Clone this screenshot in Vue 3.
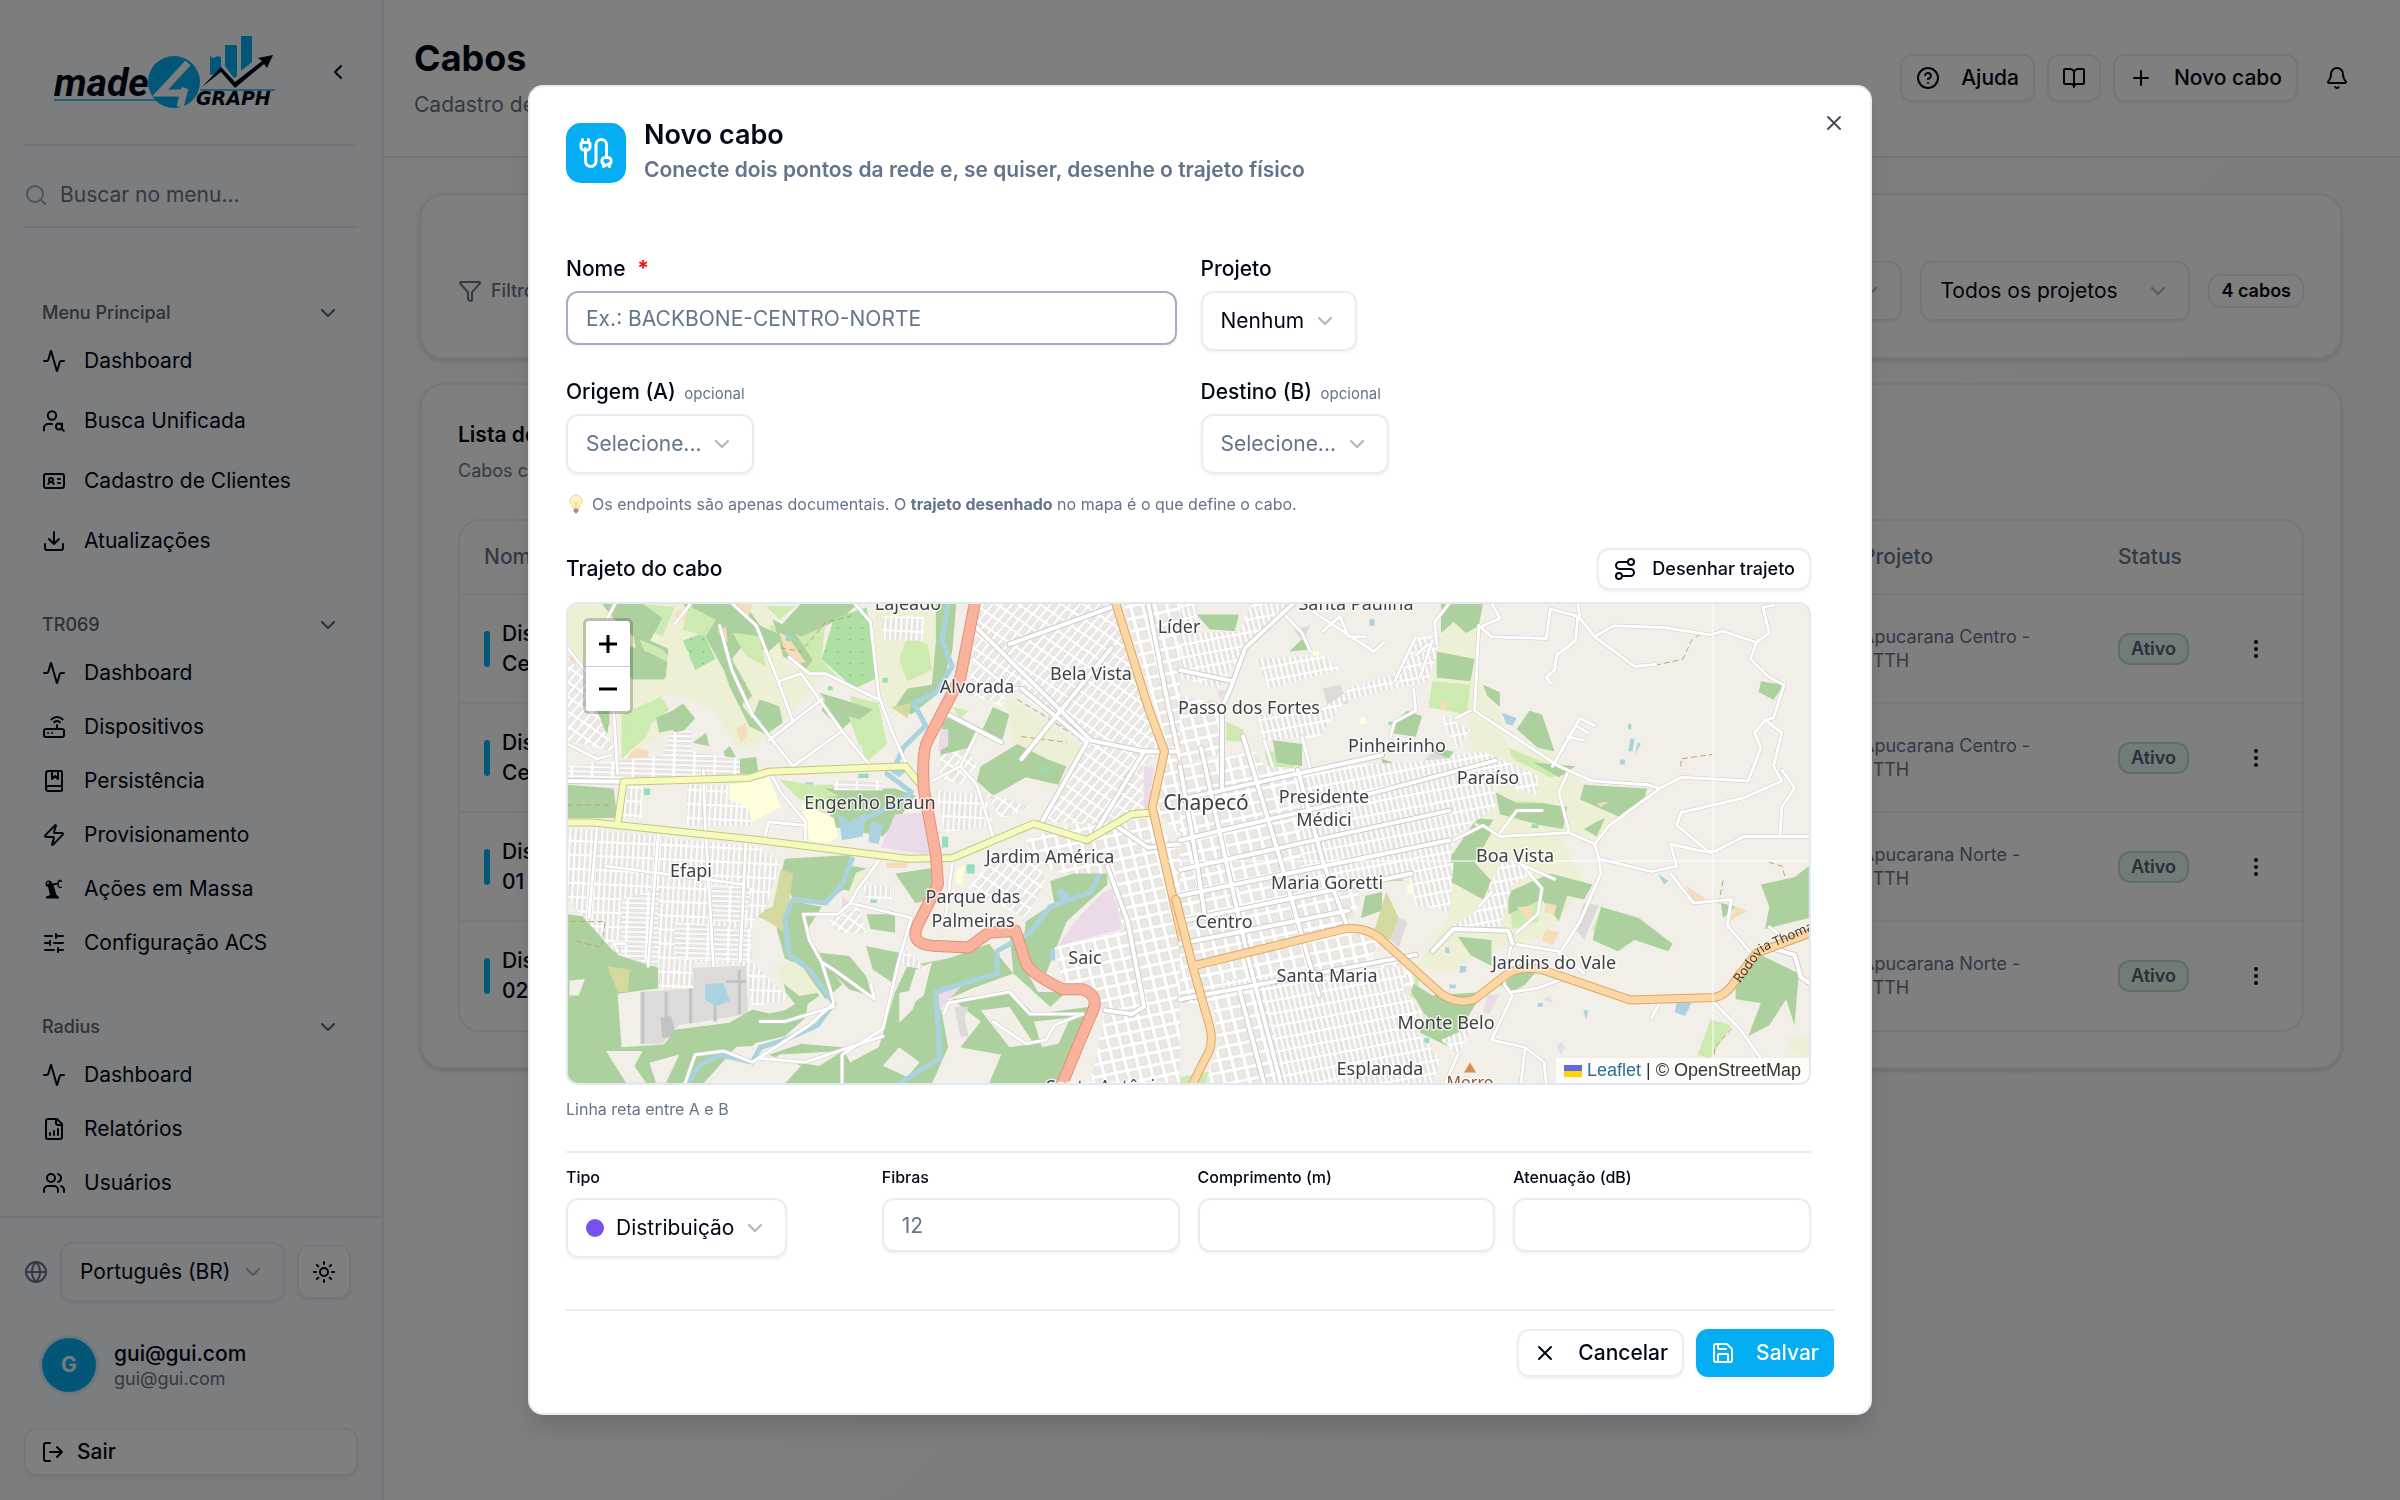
<script setup>
import { ref } from 'vue'

const circle = (x, y, r) => `M${x - r} ${y}a${r} ${r} 0 1 0 ${r * 2} 0a${r} ${r} 0 1 0 ${-r * 2} 0`

const icons = {
  activity: 'M22 12h-2.48a2 2 0 0 0-1.93 1.46l-2.35 8.36a.25.25 0 0 1-.48 0L9.24 2.18a.25.25 0 0 0-.48 0l-2.35 8.36A2 2 0 0 1 4.49 12H2',
  userSearch: circle(10, 6.5, 4.2) + 'M2 21.5v-2.500a4 4 0 0 1 4-4h4' + circle(17, 17.500, 3) + 'M20 14.500v5.500l1.800 1.800',
  idCard: 'M4 5h16a2 2 0 0 1 2 2v10a2 2 0 0 1-2 2H4a2 2 0 0 1-2-2V7a2 2 0 0 1 2-2zM16 10h2M16 14h2M6.17 15a3 3 0 0 1 5.66 0' + circle(9, 11, 2),
  download: 'M12 15V3M21 15v4a2 2 0 0 1-2 2H5a2 2 0 0 1-2-2v-4M7 10l5 5 5-5',
  router: 'M4 14h16a2 2 0 0 1 2 2v4a2 2 0 0 1-2 2H4a2 2 0 0 1-2-2v-4a2 2 0 0 1 2-2zM6.010 18H6M10.010 18H10M15 10v4M17.840 7.170a4 4 0 0 0-5.660 0M20.660 4.340a8 8 0 0 0-11.310 0',
  book: 'M10 2v8l3-3 3 3V2M4 19.500v-15A2.500 2.500 0 0 1 6.500 2H19a1 1 0 0 1 1 1v18a1 1 0 0 1-1 1H6.500a1 1 0 0 1 0-5H20',
  zap: 'M4 14a1 1 0 0 1-.78-1.630l9.900-10.200a.5.5 0 0 1 .860.460l-1.920 6.020A1 1 0 0 0 13 10h7a1 1 0 0 1 .780 1.630l-9.900 10.200a.5.5 0 0 1-.860-.460l1.920-6.020A1 1 0 0 0 11 14z',
  sliders: 'M10 5H3M12 19H3M14 3v4M16 17v4M21 12h-9M21 19h-5M21 5h-7M8 10v4M8 12H3',
  fileChart: 'M15 2H6a2 2 0 0 0-2 2v16a2 2 0 0 0 2 2h12a2 2 0 0 0 2-2V7zM14 2v4a2 2 0 0 0 2 2h4M8 18v-2M12 18v-4M16 18v-6',
  users: 'M16 21v-2a4 4 0 0 0-4-4H6a4 4 0 0 0-4 4v2' + circle(9, 7, 4) + 'M22 21v-2a4 4 0 0 0-3-3.870M16 3.130a4 4 0 0 1 0 7.750',
  globe: circle(12, 12, 10) + 'M12 2a14.500 14.500 0 0 0 0 20 14.500 14.500 0 0 0 0-20M2 12h20',
  sun: circle(12, 12, 4) + 'M12 2v2M12 20v2M4.930 4.930l1.410 1.410M17.660 17.660l1.410 1.410M2 12h2M20 12h2M6.340 17.660l-1.410 1.410M19.070 4.930l-1.410 1.410',
  logout: 'M16 17l5-5-5-5M21 12H9M9 21H5a2 2 0 0 1-2-2V5a2 2 0 0 1 2-2h4',
  help: circle(12, 12, 10) + 'M9.090 9a3 3 0 0 1 5.830 1c0 2-3 3-3 3M12 17h.01',
  bookOpen: 'M12 7v14M3 18a1 1 0 0 1-1-1V4a1 1 0 0 1 1-1h5a4 4 0 0 1 4 4 4 4 0 0 1 4-4h5a1 1 0 0 1 1 1v13a1 1 0 0 1-1 1h-6a3 3 0 0 0-3 3 3 3 0 0 0-3-3z',
  plus: 'M5 12h14M12 5v14',
  bell: 'M10.268 21a2 2 0 0 0 3.464 0M3.262 15.326A1 1 0 0 0 4 17h16a1 1 0 0 0 .740-1.673C19.410 13.956 18 12.499 18 8A6 6 0 0 0 6 8c0 4.499-1.411 5.956-2.738 7.326',
  filter: 'M10 20a1 1 0 0 0 .553.895l2 1A1 1 0 0 0 14 21v-7a2 2 0 0 1 .517-1.341L21.740 4.670A1 1 0 0 0 21 3H3a1 1 0 0 0-.742 1.670l7.225 7.989A2 2 0 0 1 10 14z',
  search: circle(11, 11, 8) + 'M21 21l-4.300-4.300',
  cable: 'M17 21v-2a1 1 0 0 1-1-1v-1a2 2 0 0 1 2-2h2a2 2 0 0 1 2 2v1a1 1 0 0 1-1 1zM19 15V6.500a1 1 0 0 0-7 0v11a1 1 0 0 1-7 0V9M21 21v-2M3 5V3M4 10a2 2 0 0 1-2-2V6a1 1 0 0 1 1-1h4a1 1 0 0 1 1 1v2a2 2 0 0 1-2 2zM7 5V3',
  route: circle(6, 19, 3) + 'M9 19h8.500a3.500 3.500 0 0 0 0-7h-11a3.500 3.500 0 0 1 0-7H15' + circle(18, 5, 3),
  save: 'M15.200 3a2 2 0 0 1 1.400.6l3.800 3.800a2 2 0 0 1 .6 1.400V19a2 2 0 0 1-2 2H5a2 2 0 0 1-2-2V5a2 2 0 0 1 2-2zM17 21v-7a1 1 0 0 0-1-1H8a1 1 0 0 0-1 1v7M7 3v4a1 1 0 0 0 1 1h7',
  close: 'M18 6L6 18M6 6l12 12',
  down: 'M6 9l6 6 6-6',
  left: 'M15 18l-6-6 6-6',
}
const robotArm = 'M4 21.500h13v-1.500l-2.500-2-3-9.500 4-1v2l2 1.500h2.500v-1.200h-2.200l-1-1V5.600l1-1 1.800.3.800-1-2.600-1.300-2.300 1.500v1.700l-5.400.6a3.300 3.300 0 1 0-4 3.600L8 18l-4 1.500z'

const groups = [
  { title: 'Menu Principal', roomy: true, items: [
    ['activity', 'Dashboard'], ['userSearch', 'Busca Unificada'], ['idCard', 'Cadastro de Clientes'], ['download', 'Atualizações'],
  ] },
  { title: 'TR069', items: [
    ['activity', 'Dashboard'], ['router', 'Dispositivos'], ['book', 'Persistência'], ['zap', 'Provisionamento'], ['robot', 'Ações em Massa'], ['sliders', 'Configuração ACS'],
  ] },
  { title: 'Radius', items: [['activity', 'Dashboard'], ['fileChart', 'Relatórios'], ['users', 'Usuários']] },
]

const cables = [
  { name: ['Distribuição', 'Centro 01'], project: ['Apucarana Centro -', 'FTTH'] },
  { name: ['Distribuição', 'Centro 02'], project: ['Apucarana Centro -', 'FTTH'] },
  { name: ['Distribuição', '01'], project: ['Apucarana Norte -', 'FTTH'] },
  { name: ['Distribuição', '02'], project: ['Apucarana Norte -', 'FTTH'] },
]

const nome = ref('')
const fibras = ref('')
const comprimento = ref('')
const atenuacao = ref('')

/* Map layers, west sheet and east sheet */
const west = {
  areas: [
    ['farm', 'M68 199H560L600 360L690 400L560 560L490 600L420 480L300 440L330 540L200 620L190 440L68 330ZM820 199H1000L980 380L860 500L820 400ZM1140 450L1330 590L1240 700L1160 600ZM580 1180L640 1170L690 1240L650 1275L600 1240Z'],
    ['grass', 'M230 199L330 210L300 290L240 260ZM560 260L700 240L690 350L730 400L640 380L590 320ZM760 450L830 470L850 580L800 630L780 560ZM900 290L950 310L960 380L900 410L880 350ZM200 500L300 450L260 560L200 620ZM600 690L760 690L850 760L700 770L640 730ZM1010 480L1050 490L1030 510Z'],
    ['wood', 'M150 199H250L300 240L270 300L330 330L290 390L240 370L230 290L180 240ZM350 200H500L540 260L600 290L560 330L500 310L470 350L520 450L500 470L440 360L400 280ZM640 199H780L740 240L640 290L590 260ZM300 510L350 470L380 510L340 560ZM100 490H170V530L120 520ZM700 450L790 490L740 540L690 490ZM68 690L180 700L190 780L68 780ZM490 620L530 615L535 660L490 660ZM450 600L465 585L480 615L455 620Z'],
    ['wood', 'M985 520L1010 500L1070 540L1040 620L980 630ZM1110 480L1150 500L1130 580L1080 550ZM1080 640L1170 580L1240 620L1290 640L1270 690L1190 670L1110 720L1070 680ZM600 890L760 880L770 950L700 1010L620 1000L590 930ZM870 930L960 915V1000L920 1010ZM690 700H870L920 720L880 780L840 830L700 800L720 750ZM970 199L1020 199L1010 330L980 440L910 500L870 480L900 430L960 420L970 300ZM800 1040H870V1090L810 1080Z'],
    ['wood', 'M1250 950L1390 900L1390 960L1290 1060L1240 1200L1180 1160L1190 1060L1260 1010ZM68 1040L160 1055L190 1150L290 1185V1240L190 1255L200 1400L330 1390L510 1320L600 1300L660 1260L650 1320L600 1370L480 1400L400 1498H68ZM600 1000L690 1020L650 1090L700 1170L740 1230L700 1270L640 1180L600 1160L580 1080ZM300 1000L350 970L400 1000L380 1035L310 1030Z'],
    ['wood', 'M560 1420L640 1390L740 1400L760 1440L830 1400L870 1250L900 1180L1000 1160L1100 1120L1160 1200L1060 1240L980 1280L1000 1400L960 1498H600L640 1450ZM1010 1270L1150 1250L1210 1310L1350 1290L1330 1400L1290 1498H1100L1130 1420L1030 1400L1080 1330ZM1150 1090L1210 1200L1290 1250L1250 1290L1160 1200Z'],
    ['land', 'M920 1190L960 1170L940 1260L890 1300ZM1080 1300L1150 1290L1210 1390L1150 1400ZM1210 1330L1300 1320L1270 1390L1230 1400ZM840 1450L880 1400L930 1440L900 1480ZM1050 1420L1090 1440L1070 1498H1030ZM440 1470L500 1440L520 1498H440ZM72 1220L110 1215L95 1260H72ZM1180 1170L1215 1210L1260 1250L1220 1250Z'],
    ['orchard', 'M720 240L800 210L830 400L770 430L690 350ZM350 300L400 280L430 350L380 380Z'],
    ['khaki', 'M590 920L620 930L600 1090L560 1060L520 1040L570 1020ZM165 1180L220 1190L215 1250L190 1250ZM860 480L910 470L900 510Z'],
    ['pink', 'M870 770L940 765L955 880L835 860ZM1380 980L1410 970L1425 1080L1270 1125L1310 1060ZM1070 310L1150 330L1130 370L1060 330ZM1360 290L1400 310L1370 340L1345 320ZM1500 420L1530 415V490L1510 495ZM980 540L1000 540V585L975 600ZM1480 640L1505 645L1490 755H1478ZM160 1000L200 1005L180 1050ZM970 1260L1040 1225L980 1300ZM740 990L760 1010L740 1030Z'],
    ['pale', 'M465 690L560 670L590 750L520 790L500 750L465 730ZM640 740L720 780L730 830L700 850L660 840ZM1390 340L1410 330L1415 360L1395 360ZM1110 470L1140 450L1130 480ZM1020 920L1040 910L1035 960L1018 955Z'],
    ['peach', 'M350 240L375 205L360 260ZM480 200L520 200L510 235ZM850 900H900V915H850ZM68 340L95 350L80 370Z'],
    ['grey', 'M375 1185L505 1180L510 1310L340 1340L300 1390L245 1390V1250L375 1240ZM1015 1290L1050 1290L1040 1320L1050 1370L1030 1370Z'],
    ['darkgrey', 'M305 1250H313V1370H305ZM425 1290H433V1330H425ZM485 1190H492V1310H485ZM455 1218H505V1226H455ZM365 1240H373V1335H365ZM295 1320L320 1315L335 1370L300 1375ZM248 1250H256V1390H248Z'],
    ['water', 'M730 770L760 790L800 765L790 830L740 840ZM810 790L840 795L830 850L805 845ZM405 1230L450 1225L465 1275L430 1290L405 1270ZM840 640L900 650L880 670ZM1250 1135H1262V1165H1250ZM650 683H670V690H650ZM1270 970L1300 985L1290 1010L1265 990Z'],
    ['mint', 'M255 700H270V718H255ZM135 890H150V935H135ZM1045 905H1065V930H1045ZM495 990H510V1010H495ZM1382 1410H1398V1435H1382ZM985 830H1000V860H985ZM780 660H805V672H780ZM810 990H825V1010H810ZM530 510H545V525H530ZM1230 640H1245V655H1230Z'],
  ],
  detail: [
    ['grass', 'M370 20L450 60L420 110L350 90ZM500 100L580 110L600 200L540 170ZM190 350L290 300L310 330L220 400L180 460ZM220 120L290 150L330 200L250 190ZM600 20L690 20L640 60ZM840 330L930 340L930 400L880 440ZM640 540L760 560L820 590L700 600Z'],
    ['wood', 'M270 355L350 320L385 355L350 385L280 400ZM160 130L250 160L310 190L300 240L200 240L160 200ZM470 200L540 250L530 320L590 400L550 380L490 260ZM720 25L790 30L770 65L730 60ZM620 60L680 90L740 180L720 210L650 170L640 120ZM760 280L830 300L920 330L880 360L810 340ZM580 300L640 320L650 370L600 405L550 380ZM30 345L130 345L125 400L60 385ZM380 430L420 400L430 440Z'],
    ['wood', 'M760 1060L850 1070L900 1130L920 1190L850 1170L800 1120ZM640 1100L700 1090L760 1190L700 1230L660 1180ZM900 1040L1000 1060L980 1150L920 1110ZM720 1040L760 1060L750 1120ZM330 1290L490 1270L560 1230L640 1250L560 1340L360 1350L290 1340ZM860 800L920 810L870 880L830 870Z'],
    ['land', 'M120 1355L230 1355L205 1400L240 1450H180ZM250 1390L340 1365L300 1450H270ZM640 1365L830 1355L760 1400L700 1390L650 1450L580 1420ZM790 1190L860 1180L940 1210L950 1290L880 1340L730 1325L780 1260ZM1000 1180L1060 1170L1040 1230L1000 1270ZM490 1390L560 1400L520 1450H500Z'],
    ['farm', 'M625 1100L700 1085L760 1180L700 1190L650 1150ZM310 110L370 160L330 280L250 300L300 230ZM870 820L920 800L890 860L840 900Z'],
    ['peach', 'M185 470L210 445L250 455L240 480L190 490ZM510 390L540 370L545 410L525 430ZM455 95L480 80L485 130ZM640 100L665 110L720 190L690 190L655 150ZM320 45L345 30L350 60ZM530 15L560 20L550 45Z'],
    ['mint', 'M660 110H680V125H660ZM785 260H800V272H785ZM575 355H590V370H575ZM950 235H965V250H950Z'],
  ],
  grids: [
    ['tall', 'M68 805L540 860L590 900L550 1030L520 1060V1170L610 1270L520 1290L505 1180L400 1170L270 1180L180 1140L100 1040L68 1000Z'],
    ['flat', 'M200 1000L290 970L290 1180L200 1150ZM330 1060L520 1080L515 1170L330 1160ZM420 960L520 970L500 1060L420 1060Z'],
    ['tall', 'M200 690H250V780L190 780ZM360 690H460V730L510 750L520 800L360 800ZM840 235H940V300H840ZM970 705L1090 720L1110 800L990 820ZM290 1180L375 1170V1240H290Z'],
    ['flat', 'M68 640L300 610L320 550L370 540V600L490 620V665L68 685ZM720 680H840V705H720Z'],
    ['slant', 'M68 350L100 380L180 600L68 570ZM980 610L1050 590L1070 640L1030 690L980 670ZM1090 710L1200 750L1130 780ZM1050 970L1100 900L1200 860L1240 950L1190 1050L1100 1000ZM1060 360L1180 400L1130 470L1050 450ZM700 1060L780 1020L800 1090L740 1090Z'],
    ['slant', 'M1075 199H1400L1520 600L1478 640V755L1410 800L1230 790L1340 590L1060 340V260Z'],
    ['block', 'M1190 840L1290 800L1500 780L1568 870V1498H1350L1385 1300L1280 1220L1260 1130L1430 1085L1390 930L1280 930L1220 900ZM1490 199H1568V620L1530 560L1440 250L1430 199ZM1540 600L1568 600V830L1510 760Z'],
    ['tall', 'M790 960L860 965V1000L800 1000ZM890 1130L950 1190L890 1180Z'],
  ],
  river: ['M1000 199L985 300L1010 370L970 440L915 470L945 530L890 590L870 640', 'M850 660L910 710L880 740L800 780', 'M765 890L740 960L700 1010L620 1000L600 1050L610 1150L660 1190L720 1280L680 1340L600 1380L540 1400L520 1440L440 1420L390 1450L360 1498', 'M1380 910L1350 980L1250 1020L1200 1090L1120 1140L1120 1200L970 1250L980 1430L880 1498'],
  tracks: ['M68 745H170M590 320L640 330L700 250L760 235M1170 460L1230 500L1300 550M1180 560L1290 575M75 1060L160 1060L150 1130L80 1110'],
  minor: [
    'M770 199L810 250L830 450L860 540L900 640', 'M470 199L530 260L580 400L620 520', 'M610 345L660 390L700 390L830 460', 'M440 260L470 380L520 500L620 640',
    'M560 570L690 460M585 410L640 390L740 545L810 640M620 640L740 545', 'M185 199L165 240M370 199L330 255', 'M68 320L110 380L180 480L190 660', 'M570 670L590 710L650 790V840',
    'M550 835L560 790L650 800', 'M830 895L780 970L760 1010L910 1050L880 1160L840 1350L740 1420V1498', 'M760 1010L730 1040L645 1040L660 1110L690 1170L720 1190L820 1270L810 1230',
    'M690 1170L710 1240L720 1280L660 1340L520 1440L450 1410L380 1420L355 1498', 'M540 1330L600 1330L720 1290', 'M990 1310L1000 1280L1150 1250L1200 1310L1330 1310', 'M1110 1330L1190 1390L1240 1380L1260 1340L1330 1310', 'M400 650L405 800L425 1180', 'M140 800L120 1050',
    'M290 820L265 1180', 'M505 830L490 1170', 'M1010 900L990 1080', 'M160 910L500 960', 'M960 680L1030 640L1075 540', 'M1030 640L1070 690L1110 830',
    'M68 580L140 620L175 610', 'M540 1430L650 1440L840 1370', 'M1060 350L1150 430L1180 430', 'M190 1140L180 1120L210 1120',
  ],
  major: ['M1000 500L1130 575', 'M1065 260L1350 570L1480 600L1568 600', 'M1180 430L1340 575L1230 790', 'M1360 820L1480 600', 'M1150 310L1400 210', 'M1385 1300L1450 1310L1480 1290L1440 1060L1390 910', 'M1410 800L1490 860L1568 850', 'M1490 199L1540 480L1568 620', 'M1400 320L1180 620', 'M68 680L200 682'],
  yellow: ['M60 792H130L540 840L900 890L1010 888L1210 795L1340 840L1450 770L1500 765', 'M190 795L205 682L510 672L560 655L895 640L940 700'],
  orange: ['M1408 190L1490 480L1530 600L1500 750L1580 1140'],
  red: ['M1067 190L1030 400L950 570Q935 600 940 700L970 880L975 960L925 1070Q905 1120 960 1125L1050 1130L1100 1090L1165 1085L1190 1170Q1200 1200 1280 1243L1330 1243Q1370 1260 1355 1300L1320 1390L1275 1510'],
}
const east = {
  areas: [
    ['farm', 'M640 199H720L700 390L760 500L780 590L880 600L950 680L1050 780L990 830L900 830L960 950L900 1060L850 1110L700 1150L640 1200L560 1180L640 1050L640 900L700 800L760 700L690 580L680 480L590 480L610 330ZM1440 1370L1494 1375V1430L1450 1410ZM200 199H240L210 230Z'],
    ['grass', 'M600 410L690 420L680 500L590 480ZM780 590L930 660L880 670L790 620ZM200 600L290 600L270 645L210 640ZM780 1000L860 1010L850 1060L790 1080ZM1260 1325L1310 1340L1260 1430L1230 1420ZM110 520L150 540L150 575L110 570ZM0 1480L100 1460V1498H0ZM520 1200L570 1210L560 1270L530 1250ZM760 730L880 740L880 770ZM1010 1000L980 1080L990 1100L1000 1020Z'],
    ['wood', 'M620 199H720L710 260L680 280L650 250L620 280ZM610 330L700 350L690 410L610 400ZM720 420L760 440V480L730 450ZM830 490L860 500L890 600L850 590L800 540ZM960 690L1110 700L1100 740L1050 780L950 730ZM750 710L800 740L860 740L920 750L910 810L860 800L760 770ZM700 790L640 890V950L720 1000L740 950L700 900L740 820ZM990 790L960 810L990 830L1010 780ZM700 780L745 785L730 810L700 800Z'],
    ['wood', 'M780 980L880 930L980 960L960 1000L920 990L900 1060L860 1000L780 1040ZM1000 1020L1090 1050L1170 1120L1160 1140L1080 1110L1040 1140L980 1110ZM440 990L480 980L480 1030L430 1050ZM530 1210L600 1260L720 1250L640 1400L570 1360L580 1310ZM660 1100L740 1110L740 1180L690 1150ZM1380 960L1460 940L1494 910V1050L1390 1080L1400 1020ZM1380 1150L1470 1200L1460 1340L1440 1270L1400 1340L1350 1370L1380 1280L1320 1270V1230Z'],
    ['wood', 'M1380 410L1435 420L1410 460L1375 440ZM540 490L575 505L560 560L500 550L510 520ZM220 570L290 580V640L230 630ZM40 230L140 230L130 275L70 270ZM645 650H665L670 750H645ZM300 285L305 325L260 330ZM1285 1010L1320 1020L1290 1050ZM545 370L575 355V380ZM600 590L650 600L640 620L600 610ZM800 1200L850 1190L820 1230L790 1250L760 1230ZM120 1270H150V1300H120ZM200 1410L230 1405V1465H200ZM480 620L530 640L520 660L480 650ZM840 630L940 640L900 670Z'],
    ['peach', 'M620 460L640 470L630 490L620 485ZM760 540L795 550L790 560ZM990 740L1020 735L1000 750ZM800 1020L840 1020L830 1060ZM870 1010L895 1015L890 1040L865 1035ZM1200 960L1250 1000L1220 1010ZM1320 1020L1350 1030L1305 1060ZM870 1080L900 1090L885 1125L860 1110ZM70 460L95 470L50 590L20 600L10 560L50 500Z'],
    ['khaki', 'M490 915L530 910V950L490 950ZM490 980L520 1050L500 1110L460 1090ZM240 1360L290 1350V1395L240 1395Z'],
    ['pink', 'M450 685L495 670L500 685L455 698ZM730 1260L760 1255L735 1310L720 1305ZM895 1400L905 1385L915 1400L905 1420ZM90 435H110L95 460ZM860 1270L880 1260L885 1280Z'],
    ['grey', 'M270 270L310 260L290 300ZM340 430L380 420L400 470L350 480ZM960 1010L995 1015L960 1110L940 1080ZM520 1050L540 1060L520 1130L500 1110ZM600 600L640 620L640 640L580 625Z'],
    ['water', 'M765 495L800 510L790 530L775 525ZM1070 565H1080L1075 600H1065ZM1088 575L1095 580L1080 608ZM1045 622H1057V635H1045ZM1180 1280H1215L1200 1315L1175 1305ZM665 1180L680 1180V1195L665 1200ZM958 1300H970L965 1325ZM1135 930L1160 950L1150 960ZM450 242H462V260H450ZM630 1130H640V1145H630ZM850 1280H862V1290H850ZM70 560L90 550V575L65 585ZM640 1230H655V1240H640Z'],
    ['pale', 'M315 330H330V350H315ZM428 508H442V525H428ZM315 1020L330 1020L325 1055H310ZM430 1145L458 1140V1180H432ZM540 960H558V985H540ZM50 1095L65 1100L60 1120ZM70 795H82V805H70ZM490 708H505V720H490ZM225 1045H235V1070H225ZM405 1175H420V1190H405Z'],
    ['mint', 'M255 1040H275V1062H255ZM835 797H852V807H835ZM418 1360H430V1372H418ZM1065 525H1072V540H1065ZM205 545H212V562H205ZM348 890H360V900H348ZM580 1375H592V1388H580ZM495 520H505V528H495Z'],
  ],
  detail: [],
  grids: [
    ['block', 'M0 640L180 600L200 640L300 650L420 640L400 900L430 1000L400 1070L480 1110L430 1200L100 1210L0 1200Z'],
    ['fine', 'M170 199H260L160 320L90 430L0 400V199H40V280L140 275ZM180 350L340 340L380 380L210 430ZM400 430L510 390L560 290L620 290L590 410L400 460ZM180 500L330 490L420 420L330 560L200 570ZM620 500L690 540L660 590L640 560ZM600 1020H560L540 920L650 900L640 1040Z'],
    ['fine', 'M280 650L740 610L750 750L650 830L640 920L400 960L290 930ZM640 610L720 600L850 665V720L750 680ZM770 890L850 920L790 960L760 1080L690 1090L650 1070L720 1020L735 960Z'],
    ['block', 'M0 1200L430 1200L540 1150L480 1130L560 1210L540 1280L0 1280Z'],
    ['fine', 'M90 1220L540 1180L530 1250L590 1320L560 1360L620 1430L600 1498H200ZM620 1380L700 1340L660 1420Z'],
    ['block', 'M0 450L90 470L110 600L0 640ZM80 1260L200 1240L240 1498H60L90 1400Z'],
  ],
  river: [],
  tracks: ['M1130 367L1195 350L1215 300L1240 280', 'M1190 640V620L1265 608M1400 900L1430 910L1440 950M1290 950L1280 1010', 'M1310 1350L1270 1400V1430'],
  minor: [
    'M710 260L700 490L900 640L980 680L1110 690L1140 700L1020 800L985 850L995 890L1120 925L1180 910L1165 850L1240 870L1270 870L1340 830H1500',
    'M710 260L740 290L870 295L880 215L945 235L940 300L895 340L890 380L870 400L880 415', 'M945 199L950 240L985 290L1080 370L1130 365',
    'M985 290L1030 260L1150 265L1260 285L1290 275L1370 305L1400 280L1385 210L1410 205', 'M1370 305L1355 350L1400 400L1435 420L1410 510L1390 515L1430 550L1410 640L1430 680L1340 725L1190 765L1180 800L1260 875',
    'M1140 700L1190 670L1350 680L1380 590L1365 550L1390 515', 'M1430 650L1460 700L1430 750L1425 825', 'M1165 930L1220 1010L1310 1000L1300 1070L1360 1150', 'M920 660L900 710L925 820L985 850',
    'M995 890L1000 930L950 1060L900 1150', 'M790 1120L900 1140L960 1200', 'M650 1080L770 1080L790 1100L770 1230L790 1260L740 1380L820 1400L865 1440L870 1498', 'M800 890L860 970L850 1040L800 1090', 'M800 900L890 945',
    'M885 640L950 510L985 530M940 530L970 550M920 560L960 570', 'M1270 1280L1330 1350L1380 1430', 'M1120 1320L1140 1280', 'M790 1250L850 1240L920 1210',
    'M610 310L605 250L640 199M740 199L760 240L720 260', 'M240 220L290 280L310 330M300 210L460 330L485 305M340 275L380 235L400 290L440 290', 'M500 560L510 520L560 490L555 430', 'M655 510L690 490', 'M740 980L710 1020', 'M650 840L720 800L760 830L920 820', 'M820 1400L810 1498M660 1420L630 1498', 'M1400 1075L1430 1100', 'M760 820L800 760L860 760',
    'M560 290L510 410M600 300L570 400M560 340L590 310', 'M200 570L220 640M290 560L310 650',
  ],
  major: ['M0 730L480 610', 'M0 840L300 760L750 625', 'M0 920L640 760', 'M0 990L640 840', 'M0 1060L550 930', 'M0 1120L400 1030', 'M270 199L155 320L120 430L100 480V700', 'M0 380L125 410', 'M50 590L110 900L160 1150L240 1498', 'M150 560L240 900L330 1260', 'M280 650L340 900L400 1080', 'M0 640L40 900L60 1050', 'M600 1140L650 1080L780 1085L790 1120', 'M0 1270L140 1240L200 1498', 'M140 1240L560 1150', 'M1400 1130L1460 1150L1475 1210L1500 1230'],
  yellow: [],
  orange: ['M-10 1000L30 1180L72 1350Q80 1400 60 1430L25 1510', 'M30 1180L390 1080Q440 1072 475 1105L620 1255Q660 1285 700 1270L780 1200Q810 1180 860 1190L1070 1272L1270 1265Q1300 1260 1325 1210L1370 1145L1510 1085'],
  red: [],
}
const sheets = [
  { id: 'west', shift: 'translate(-28 -74) scale(.40816 .3699)', ...west },
  { id: 'east', shift: 'translate(612 -74) scale(.42092 .3699)', ...east },
]
const places = [
  ['Lajeado', 340, 6], ['Alvorada', 409, 89], ['Bela Vista', 523, 76], ['Engenho Braun', 302, 205], ['Efapi', 123, 273], ['Jardim América', 482, 259],
  ['Parque das', 405, 299], ['Palmeiras', 405, 323], ['Saic', 517, 360], ['Santo Antônio', 538, 489], ['Líder', 611, 29], ['Santa Paulina', 788, 6],
  ['Passo dos Fortes', 681, 110], ['Pinheirinho', 829, 148], ['Paraíso', 920, 180], ['Presidente', 756, 199], ['Médici', 756, 222], ['Boa Vista', 947, 258],
  ['Maria Goretti', 759, 285], ['Centro', 656, 324], ['Santa Maria', 759, 378], ['Jardins do Vale', 986, 365], ['Monte Belo', 878, 425], ['Esplanada', 812, 471],
]
</script>

<template>
  <div class="app">
    <aside class="sidebar">
      <div class="brand">
        <svg class="logo" viewBox="0 0 224 76" role="img" aria-label="made4graph">
          <text class="logo-made" x="0" y="62">made</text>
          <path d="M0 66H104" stroke="#05aef2" stroke-width="1.500" />
          <circle cx="120" cy="48" r="26" fill="#05aef2" />
          <path d="M134 29L106 59H131M131 54L126 73" fill="none" stroke="#f8fafc" stroke-width="7" />
          <path d="M156 22l3 2 5-2 3 1v12l-6 5-5 1zM171 11h12v31l-3 2-9-12zM187 2h11v26l-11 9z" fill="#05aef2" />
          <path d="M148 53L167 33l14 15 27-21-4-3 15-3-6 13-3-4-29 24-14-16z" fill="#020817" />
          <path d="M146 56H221" stroke="#05aef2" stroke-width="1.500" />
          <text class="logo-graph" x="142" y="71">GRAPH</text>
        </svg>
        <button class="ghost" aria-label="Recolher menu"><svg class="icon" viewBox="0 0 24 24"><path :d="icons.left" /></svg></button>
      </div>
      <label class="search">
        <svg class="icon" viewBox="0 0 24 24"><path :d="icons.search" /></svg>
        <input type="text" placeholder="Buscar no menu..." aria-label="Buscar no menu" />
      </label>
      <nav class="nav">
        <section v-for="g in groups" :key="g.title" class="group">
          <button class="group-title">{{ g.title }}<svg class="icon" viewBox="0 0 24 24"><path :d="icons.down" /></svg></button>
          <div class="items" :class="{ roomy: g.roomy }">
            <a v-for="[icon, label] in g.items" :key="label" href="#" class="item">
              <svg v-if="icon === 'robot'" class="icon solid" viewBox="0 0 24 24"><path :d="robotArm" /><circle class="hole" cx="6" cy="6" r="1" /></svg>
              <svg v-else class="icon" viewBox="0 0 24 24"><path :d="icons[icon]" /></svg>
              {{ label }}
            </a>
          </div>
        </section>
      </nav>
      <div class="side-foot">
        <div class="prefs">
          <svg class="icon muted" viewBox="0 0 24 24"><path :d="icons.globe" /></svg>
          <label class="select grow">
            <select aria-label="Idioma"><option>Português (BR)</option></select>
            <svg class="icon chev" viewBox="0 0 24 24"><path :d="icons.down" /></svg>
          </label>
          <button class="square tall" aria-label="Tema"><svg class="icon" viewBox="0 0 24 24"><path :d="icons.sun" /></svg></button>
        </div>
        <div class="user">
          <span class="avatar">G</span>
          <div><div class="user-name">gui@gui.com</div><div class="user-mail">gui@gui.com</div></div>
        </div>
        <button class="btn exit"><svg class="icon" viewBox="0 0 24 24"><path :d="icons.logout" /></svg>Sair</button>
      </div>
    </aside>

    <main class="main">
      <header class="top">
        <div>
          <h1>Cabos</h1>
          <p>Cadastro de cabos da rede</p>
        </div>
        <div class="top-actions">
          <button class="btn"><svg class="icon" viewBox="0 0 24 24"><path :d="icons.help" /></svg>Ajuda</button>
          <button class="square" aria-label="Documentação"><svg class="icon" viewBox="0 0 24 24"><path :d="icons.bookOpen" /></svg></button>
          <button class="btn"><svg class="icon" viewBox="0 0 24 24"><path :d="icons.plus" /></svg>Novo cabo</button>
          <button class="ghost bell" aria-label="Notificações"><svg class="icon" viewBox="0 0 24 24"><path :d="icons.bell" /></svg></button>
        </div>
      </header>
      <div class="content">
        <section class="card filters">
          <span class="filter-label"><svg class="icon" viewBox="0 0 24 24"><path :d="icons.filter" /></svg>Filtros</span>
          <div class="filter-tools">
            <label class="select wide">
              <select aria-label="Status"><option>Todos os status</option></select>
              <svg class="icon chev" viewBox="0 0 24 24"><path :d="icons.down" /></svg>
            </label>
            <label class="select wide">
              <select aria-label="Projeto"><option>Todos os projetos</option></select>
              <svg class="icon chev" viewBox="0 0 24 24"><path :d="icons.down" /></svg>
            </label>
            <span class="count">4 cabos</span>
          </div>
        </section>
        <section class="card list">
          <h2>Lista de cabos</h2>
          <p>Cabos cadastrados</p>
          <div class="table-box">
            <table>
              <colgroup><col /><col class="c-project" /><col class="c-status" /><col class="c-menu" /></colgroup>
              <thead><tr><th>Nome</th><th>Projeto</th><th>Status</th><th></th></tr></thead>
              <tbody>
                <tr v-for="(c, i) in cables" :key="i">
                  <td><div class="cable"><i class="bar"></i><span>{{ c.name[0] }}<br />{{ c.name[1] }}</span></div></td>
                  <td class="project">{{ c.project[0] }}<br />{{ c.project[1] }}</td>
                  <td><span class="status">Ativo</span></td>
                  <td class="menu-cell">
                    <button class="ghost" aria-label="Ações"><svg class="icon solid" viewBox="0 0 24 24"><circle cx="12" cy="5" r="2" /><circle cx="12" cy="12" r="2" /><circle cx="12" cy="19" r="2" /></svg></button>
                  </td>
                </tr>
              </tbody>
            </table>
          </div>
        </section>
      </div>
    </main>

    <div class="overlay">
      <div class="modal" role="dialog" aria-labelledby="modal-title">
        <header class="modal-head">
          <span class="tile"><svg class="icon" viewBox="0 0 24 24"><path :d="icons.cable" /></svg></span>
          <div class="modal-titles">
            <h2 id="modal-title">Novo cabo</h2>
            <p>Conecte dois pontos da rede e, se quiser, desenhe o trajeto físico</p>
          </div>
          <button class="ghost close" aria-label="Fechar"><svg class="icon" viewBox="0 0 24 24"><path :d="icons.close" /></svg></button>
        </header>

        <form class="form" @submit.prevent>
          <div class="pair">
            <div class="field">
              <label for="nome">Nome <b class="req">*</b></label>
              <input id="nome" v-model="nome" class="input focus" type="text" placeholder="Ex.: BACKBONE-CENTRO-NORTE" />
            </div>
            <div class="field">
              <label for="projeto">Projeto</label>
              <div class="select">
                <select id="projeto"><option>Nenhum</option></select>
                <svg class="icon chev" viewBox="0 0 24 24"><path :d="icons.down" /></svg>
              </div>
            </div>
            <div class="field">
              <label for="origem">Origem (A) <small>opcional</small></label>
              <div class="select">
                <select id="origem" class="empty"><option>Selecione...</option></select>
                <svg class="icon chev" viewBox="0 0 24 24"><path :d="icons.down" /></svg>
              </div>
            </div>
            <div class="field">
              <label for="destino">Destino (B) <small>opcional</small></label>
              <div class="select">
                <select id="destino" class="empty"><option>Selecione...</option></select>
                <svg class="icon chev" viewBox="0 0 24 24"><path :d="icons.down" /></svg>
              </div>
            </div>
          </div>
          <p class="hint">
            <svg class="bulb" viewBox="0 0 20 20"><path d="M10 1a6 6 0 0 0-6 6c0 3 2.500 4 3 7.500h6c.5-3.500 3-4.500 3-7.500a6 6 0 0 0-6-6z" fill="#fdf3c4" stroke="#f0d58a" /><path d="M8 8l2 2 2-2M10 10v4" fill="none" stroke="#f5c95c" /><path d="M7.500 15h5l-.5 3-2 1.500-2-1.500z" fill="#8b8f99" /></svg>
            <span>Os endpoints são apenas documentais. O <strong>trajeto desenhado</strong> no mapa é o que define o cabo.</span>
          </p>
          <div class="route-head">
            <span>Trajeto do cabo</span>
            <button type="button" class="btn small"><svg class="icon" viewBox="0 0 24 24"><path :d="icons.route" /></svg>Desenhar trajeto</button>
          </div>
          <div class="map">
            <svg class="map-art" viewBox="0 0 1241 480" preserveAspectRatio="xMidYMid slice">
              <defs>
                <pattern id="tall" width="13" height="38" patternUnits="userSpaceOnUse" patternTransform="rotate(3)"><path d="M0 0H13V38H0Z" class="g-road" /><path d="M4 4H10V34H4Z" class="g-block" /></pattern>
                <pattern id="flat" width="50" height="13" patternUnits="userSpaceOnUse" patternTransform="rotate(2)"><path d="M0 0H50V13H0Z" class="g-road" /><path d="M4 4H46V10H4Z" class="g-block" /></pattern>
                <pattern id="slant" width="19" height="32" patternUnits="userSpaceOnUse" patternTransform="rotate(37)"><path d="M0 0H19V32H0Z" class="g-road" /><path d="M4 4H15V28H4Z" class="g-block" /></pattern>
                <pattern id="block" width="29" height="33" patternUnits="userSpaceOnUse" patternTransform="rotate(-13)"><path d="M0 0H29V33H0Z" class="g-road" /><path d="M5 5H24V28H5Z" class="g-block" /></pattern>
                <pattern id="fine" width="13" height="34" patternUnits="userSpaceOnUse" patternTransform="rotate(-12)"><path d="M0 0H13V34H0Z" class="g-road" /><path d="M4 4H10V30H4Z" class="g-block" /></pattern>
                <pattern id="orchard" width="30" height="32" patternUnits="userSpaceOnUse"><path d="M0 0H30V32H0Z" fill="#aedfa3" /><circle cx="10" cy="10" r="2" fill="#6fae68" /></pattern>
                <path id="rodovia" d="M1172 380L1190 355Q1194 348 1203 345L1290 307" />
              </defs>
              <rect width="1241" height="480" fill="#f2efe9" />
              <g v-for="s in sheets" :key="s.id" :transform="s.shift" class="sheet">
                <path v-for="([kind, d], i) in s.areas" :key="'a' + i" :class="'a-' + kind" :d="d" />
                <g transform="translate(63.7 189.2) scale(.8167 .901)">
                  <path v-for="([kind, d], i) in s.detail" :key="'x' + i" :class="'a-' + kind" :d="d" />
                </g>
                <path v-for="(d, i) in s.river" :key="'r' + i" class="l-river" :d="d" />
                <path v-for="([kind, d], i) in s.grids" :key="'g' + i" :fill="`url(#${kind})`" :d="d" />
                <path v-for="(d, i) in s.tracks" :key="'t' + i" class="l-track" :d="d" />
                <path v-for="(d, i) in s.minor" :key="'mc' + i" class="l-minor-case" :d="d" />
                <path v-for="(d, i) in s.minor" :key="'m' + i" class="l-minor" :d="d" />
                <path v-for="(d, i) in s.major" :key="'jc' + i" class="l-major-case" :d="d" />
                <path v-for="(d, i) in s.major" :key="'j' + i" class="l-major" :d="d" />
                <path v-for="(d, i) in s.yellow" :key="'yc' + i" class="l-yellow-case" :d="d" />
                <path v-for="(d, i) in s.yellow" :key="'y' + i" class="l-yellow" :d="d" />
                <path v-for="(d, i) in s.orange" :key="'oc' + i" class="l-orange-case" :d="d" />
                <path v-for="(d, i) in s.orange" :key="'o' + i" class="l-orange" :d="d" />
                <path v-for="(d, i) in s.red" :key="'dc' + i" class="l-red-case" :d="d" />
                <path v-for="(d, i) in s.red" :key="'d' + i" class="l-red" :d="d" />
              </g>
              <path d="M1145 0V480M600 257.500H1241" stroke="#fff" fill="none" />
              <path d="M902 459l6 10h-12z" fill="#d08f55" />
              <text v-for="[name, x, y] in places" :key="name" class="place" :x="x" :y="y">{{ name }}</text>
              <text class="place city" x="638" y="206">Chapecó</text>
              <text class="place peak" x="902" y="484">Morro</text>
              <text class="road-name"><textPath href="#rodovia">Rodovia Thomaz</textPath></text>
            </svg>
            <div class="zoom">
              <button type="button" aria-label="Aproximar"><svg viewBox="0 0 24 24"><path d="M3 12H21M12 3V21" /></svg></button>
              <button type="button" aria-label="Afastar"><svg viewBox="0 0 24 24"><path d="M3 12H21" /></svg></button>
            </div>
            <div class="credit">
              <svg viewBox="0 0 18 12"><path d="M0 0H18V6H0Z" fill="#5c6be8" /><path d="M0 6H18V12H0Z" fill="#ffd500" /></svg>
              <a href="#">Leaflet</a> | © OpenStreetMap
            </div>
          </div>
          <p class="caption">Linha reta entre A e B</p>
          <div class="specs">
            <div class="field">
              <label for="tipo">Tipo</label>
              <div class="select">
                <i class="dot"></i>
                <select id="tipo"><option>Distribuição</option></select>
                <svg class="icon chev" viewBox="0 0 24 24"><path :d="icons.down" /></svg>
              </div>
            </div>
            <div class="field"><label for="fibras">Fibras</label><input id="fibras" v-model="fibras" class="input" type="text" placeholder="12" /></div>
            <div class="field"><label for="comp">Comprimento (m)</label><input id="comp" v-model="comprimento" class="input" type="text" /></div>
            <div class="field"><label for="aten">Atenuação (dB)</label><input id="aten" v-model="atenuacao" class="input" type="text" /></div>
          </div>
        </form>
        <footer class="modal-foot">
          <button class="btn"><svg class="icon" viewBox="0 0 24 24"><path :d="icons.close" /></svg>Cancelar</button>
          <button class="btn primary"><svg class="icon" viewBox="0 0 24 24"><path :d="icons.save" /></svg>Salvar</button>
        </footer>
      </div>
    </div>
  </div>
</template>

<style>
html, body { margin: 0; }
body { font-family: Inter, "Noto Sans", sans-serif; font-size: 21px; line-height: 30px; color: #020817; }
button, input, select { font: inherit; color: inherit; }
</style>

<style scoped>
* { box-sizing: border-box; }
h1, h2, p { margin: 0; }
button { cursor: pointer; }
.app { display: flex; height: 100vh; overflow: hidden; }
.icon { flex: none; width: 24px; height: 24px; fill: none; stroke: currentColor; stroke-width: 2; stroke-linecap: round; stroke-linejoin: round; }
.icon.solid { fill: currentColor; stroke: none; }
.hole { fill: #f8fafc; }
.muted { color: #64748b; }
.ghost { display: flex; padding: 0; border: 0; background: none; }

.btn { display: inline-flex; align-items: center; gap: 21px; height: 48px; padding: 0 14px; border: 2px solid #e8edf3; border-radius: 12px; background: #fff; font-weight: 500; box-shadow: 0 2px 3px rgba(0, 0, 0, .05); white-space: nowrap; }
.btn.small { height: 42px; gap: 15px; font-size: 18px; }
.btn.primary { padding: 0 13px; border-color: #05aef2; background: #05aef2; color: #fff; }
.square { display: flex; align-items: center; justify-content: center; width: 54px; height: 48px; padding: 0; border: 2px solid #e8edf3; border-radius: 12px; background: #fff; box-shadow: 0 2px 3px rgba(0, 0, 0, .05); }
.square.tall { height: 54px; }

.select { display: inline-flex; align-items: center; align-self: flex-start; gap: 8px; height: 60px; padding: 0 18px; border: 2px solid #e8edf3; border-radius: 12px; box-shadow: 0 2px 3px rgba(0, 0, 0, .05); }
.select select { flex: 1; min-width: 0; padding: 0; border: 0; outline: 0; background: none; appearance: none; }
.select select.empty { color: #64748b; }
.chev { opacity: .3; }
.grow { flex: 1; }

.sidebar { display: flex; flex: none; flex-direction: column; width: 384px; border-right: 2px solid #e8ebf0; background: #f8fafc; }
.brand { display: flex; align-items: center; justify-content: space-between; height: 146px; margin: 0 24px; padding: 0 8px 0 30px; border-bottom: 2px solid #e5e9ef; }
.logo { width: 224px; height: 76px; }
.logo-made { font: italic 700 39px Roboto, sans-serif; fill: #020817; }
.logo-graph { font: italic 700 19px "DejaVu Sans", sans-serif; fill: #020817; }
.search { display: flex; align-items: center; gap: 12px; height: 82px; margin: 0 24px; padding-top: 17px; border-bottom: 2px solid #e5e9ef; color: #64748b; }
.search .icon { opacity: .6; }
.search input { flex: 1; min-width: 0; padding: 0; border: 0; outline: 0; background: none; }
input::placeholder { color: #64748b; opacity: 1; }
.nav { display: flex; flex: 1; flex-direction: column; gap: 36px; min-height: 0; padding: 61px 24px 0; overflow: hidden; }
.group-title { display: flex; align-items: center; justify-content: space-between; width: 100%; height: 48px; padding: 0 18px; border: 0; background: none; color: #5b6270; font-size: 18px; font-weight: 500; }
.items { display: flex; flex-direction: column; gap: 6px; }
.items.roomy { gap: 12px; }
.item { display: flex; align-items: center; gap: 18px; height: 48px; padding: 0 18px; color: #020817; text-decoration: none; }
.side-foot { display: flex; flex-direction: column; gap: 36px; padding: 24px; border-top: 2px solid #e5e9ef; }
.prefs { display: flex; align-items: center; gap: 12px; padding-right: 7px; }
.user { display: flex; align-items: center; gap: 18px; height: 54px; padding: 0 18px; }
.avatar { display: flex; align-items: center; justify-content: center; width: 54px; height: 54px; border-radius: 50%; background: #05aef2; box-shadow: 0 0 0 3px #dcecf8; color: #f1f5f9; font-weight: 700; }
.user-name { line-height: 27px; font-weight: 500; }
.user-mail { line-height: 24px; font-size: 18px; color: #64748b; }
.exit { gap: 12px; padding: 0 15px; }

.main { flex: 1; min-width: 0; background: linear-gradient(135deg, #f9fbfa, #fefdfd 45%, #f6f8fa 75%, #f9faf9); }
.top { display: flex; align-items: center; justify-content: space-between; height: 158px; padding: 0 48px 0 30px; border-bottom: 2px solid #e8ebf0; background: #fff; }
.top h1 { font-size: 36px; line-height: 45px; font-weight: 700; }
.top p { margin-top: 9px; color: #64748b; }
.top-actions { display: flex; align-items: center; gap: 12px; }
.bell { margin: 0 3px 0 15px; }
.content { display: flex; flex-direction: column; gap: 24px; padding: 35px 58px 0 36px; }
.card { border: 2px solid #eceff4; border-radius: 24px; background: #fff; box-shadow: 0 2px 4px rgba(0, 0, 0, .14); }
.filters { display: flex; align-items: center; justify-content: space-between; height: 166px; padding: 30px 36px 0; }
.filter-label { display: flex; align-items: center; gap: 9px; color: #64748b; font-size: 18px; font-weight: 500; }
.filter-tools { display: flex; align-items: center; gap: 18px; }
.select.wide { width: 270px; align-self: center; }
.count { padding: 1px 11px; border: 2px solid #e8edf3; border-radius: 12px; font-size: 18px; line-height: 28px; font-weight: 600; }
.list { padding: 35px 36px; }
.list h2 { font-size: 21px; font-weight: 600; }
.list p { margin-top: 6px; color: #64748b; font-size: 18px; }
.table-box { margin-top: 33px; border: 2px solid #eceff4; border-radius: 21px; overflow: hidden; }
table { width: 100%; border-collapse: collapse; table-layout: fixed; }
.c-project { width: 256px; }
.c-status { width: 116px; }
.c-menu { width: 92px; }
th { height: 73px; padding: 0 24px; color: #64748b; font-weight: 500; text-align: left; }
td { height: 109px; padding: 0 24px; border-top: 2px solid #f1f3f6; }
.cable { display: flex; align-items: center; gap: 12px; font-weight: 500; }
.bar { width: 6px; height: 36px; border-radius: 3px; background: #05aef2; }
.project { color: #64748b; font-size: 18px; line-height: 24px; white-space: nowrap; }
.status { display: inline-block; padding: 0 11px; border: 2px solid #bedcd0; border-radius: 12px; background: #e2f6ee; color: #526071; font-size: 18px; line-height: 28px; font-weight: 600; }
.menu-cell .ghost { margin: 0 auto; }

.overlay { position: fixed; inset: 0; display: flex; align-items: center; justify-content: center; background: rgba(0, 0, 0, .5); }
.modal { width: 56%; min-width: 1100px; padding: 36px; border: 2px solid #e8edf3; border-radius: 15px; background: #fff; box-shadow: 0 15px 24px -4px rgba(0, 0, 0, .15); }
.modal-head { display: flex; align-items: flex-start; gap: 18px; height: 60px; }
.tile { display: flex; align-items: center; justify-content: center; width: 60px; height: 60px; border-radius: 15px; background: #05aef2; color: #fff; }
.tile .icon { width: 36px; height: 36px; }
.modal-titles { flex: 1; }
.modal-titles h2 { margin-top: -3px; font-size: 27px; line-height: 30px; font-weight: 600; }
.modal-titles p { margin-top: 6px; color: #64748b; font-weight: 600; line-height: 27px; }
.close { margin-top: -12px; margin-right: -12px; color: #4a4e57; }
.form { display: flex; flex-direction: column; margin-top: 75px; padding-right: 23px; }
.pair { display: grid; grid-template-columns: 1fr 1fr; gap: 30px 24px; }
.field { display: flex; flex-direction: column; gap: 12px; }
.field label { height: 21px; line-height: 21px; font-weight: 500; white-space: nowrap; }
.req { margin-left: 6px; color: #ef1111; }
.field small { margin-left: 3px; color: #64748b; font-size: 15px; line-height: 15px; font-weight: 400; }
.input { width: 100%; height: 54px; padding: 0 18px; border: 2px solid #e8edf3; border-radius: 12px; outline: 0; background: #fff; box-shadow: 0 2px 3px rgba(0, 0, 0, .05); }
.input.focus { border-color: #a3b0c2; }
.hint { display: flex; align-items: center; gap: 6px; margin-top: 18px; color: #64748b; font-size: 16px; line-height: 24px; }
.bulb { width: 20px; height: 20px; }
.route-head { display: flex; align-items: center; justify-content: space-between; margin-top: 32px; font-weight: 500; }
.map { position: relative; height: 483px; margin-top: 12px; border: 2px solid #e2e8f0; border-radius: 12px; overflow: hidden; }
.map-art { display: block; width: 100%; height: 100%; }
.sheet path { vector-effect: non-scaling-stroke; }
.g-road { fill: #fff; }
.g-block { fill: #ece8e3; stroke: #c8c5c2; stroke-width: 1; }
.a-farm { fill: #eef0d5; }
.a-grass { fill: #cdebb0; }
.a-wood { fill: #add19e; }
.a-land { fill: #f2efe9; }
.a-orchard { fill: url(#orchard); }
.a-khaki { fill: #d6d99f; }
.a-pink { fill: #ebdbe8; }
.a-pale { fill: #ffffdb; }
.a-peach { fill: #f5dcba; }
.a-grey { fill: #dcdbda; }
.a-darkgrey { fill: #c3c3c3; }
.a-water { fill: #aad3df; }
.a-mint { fill: #96ddc0; }
.sheet [class^="l-"] { fill: none; stroke-linecap: round; stroke-linejoin: round; }
.l-river { stroke: #aad3df; stroke-width: 5; }
.l-track { stroke: #c9a067; stroke-width: 1; stroke-dasharray: 5 4; }
.l-minor-case { stroke: #cdcbc9; stroke-width: 4; }
.l-minor { stroke: #fff; stroke-width: 3; }
.l-major-case { stroke: #cfcdcb; stroke-width: 6; }
.l-major { stroke: #fff; stroke-width: 4; }
.l-yellow-case { stroke: #c5c67c; stroke-width: 8; }
.l-yellow { stroke: #f7fabf; stroke-width: 6; }
.l-orange-case { stroke: #d9a964; stroke-width: 9; }
.l-orange { stroke: #fcd6a4; stroke-width: 7; }
.l-red-case { stroke: #e0907c; stroke-width: 12; }
.l-red { stroke: #f9b29c; stroke-width: 10; }
.place { font: 18px "Noto Sans", sans-serif; fill: #3f4146; text-anchor: middle; stroke: rgba(255, 255, 255, .7); stroke-width: 3; stroke-linejoin: round; paint-order: stroke; }
.place.city { font-size: 21px; }
.place.peak { font-size: 16px; fill: #8a5a2b; }
.road-name { font: 13px "Noto Sans", sans-serif; fill: #44382a; }
.zoom { position: absolute; top: 14px; left: 15px; display: flex; flex-direction: column; border: 3px solid rgba(0, 0, 0, .2); border-radius: 6px; background: #fff; background-clip: padding-box; }
.zoom button { display: flex; align-items: center; justify-content: center; width: 44px; height: 45px; padding: 0; border: 0; background: none; }
.zoom button + button { border-top: 1px solid #ccc; }
.zoom svg { width: 24px; height: 24px; fill: none; stroke: #000; stroke-width: 3; }
.credit { position: absolute; right: 0; bottom: 0; display: flex; align-items: center; gap: 5px; padding: 0 8px; background: rgba(255, 255, 255, .8); color: #333; font: 18px/25px "Liberation Sans", sans-serif; }
.credit svg { width: 18px; height: 12px; }
.credit a { color: #2b6f97; text-decoration: none; }
.caption { margin-top: 12px; color: #64748b; font-size: 16px; line-height: 24px; }
.specs { display: grid; grid-template-columns: repeat(4, 1fr); gap: 18px; margin-top: 30px; padding-top: 15px; border-top: 2px solid #e8edf3; }
.specs label { height: 18px; font-size: 16px; line-height: 18px; }
.dot { width: 18px; height: 18px; margin-right: 4px; border-radius: 50%; background: #7850ee; }
.modal-foot { display: flex; justify-content: flex-end; gap: 12px; margin-top: 51px; padding-top: 18px; border-top: 2px solid #e8edf3; }
</style>
